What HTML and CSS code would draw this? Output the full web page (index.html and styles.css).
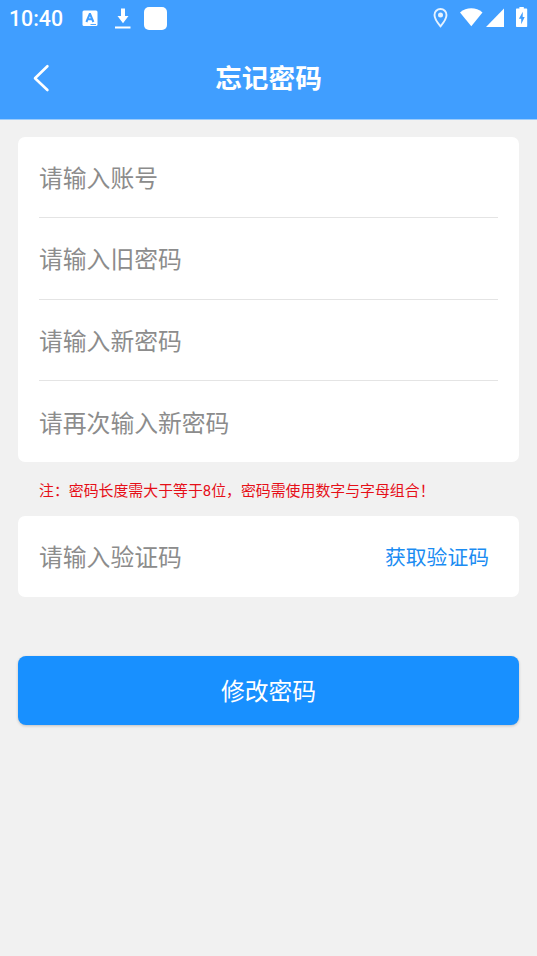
FILE: index.html
```html
<!DOCTYPE html>
<html lang="zh-CN">
<head>
<meta charset="utf-8">
<title>忘记密码</title>
<link rel="stylesheet" href="styles.css">
</head>
<body>
<header class="header">
  <div class="status">
    <span class="time">10:40</span>
    <svg class="status-left" width="90" height="37" viewBox="78 0 90 37">
      <rect x="82.500" y="10.500" width="15" height="15.500" rx="1.500" fill="#fff"/>
      <path d="M86.400 22l3.300-8h0.400l3.300 8M87.800 19.300h4.200" fill="none" stroke="#409eff" stroke-width="2"/>
      <path d="M90.500 24.500h5.500" stroke="#409eff" stroke-width="0.900"/>
      <path d="M121 8.500h4v7.500h3.500L123 23.200 117.500 16h3.500z" fill="#fff"/>
      <rect x="115" y="26.500" width="15.500" height="2" fill="#fff"/>
      <rect x="144" y="7" width="23" height="23" rx="5" fill="#fff"/>
    </svg>
    <svg class="status-right" width="100" height="37" viewBox="430 0 100 37">
      <path d="M440.500 9c-3.400 0-6 2.600-6 6 0 4.300 6 11.300 6 11.300s6-7 6-11.300c0-3.400-2.600-6-6-6z" fill="none" stroke="#e5f2ff" stroke-width="1.900"/>
      <circle cx="440.500" cy="15" r="2.500" fill="#e5f2ff"/>
      <path d="M460 12.400C466.500 7 476 7 482.500 12.400L471.300 26.300z" fill="#fff"/>
      <path d="M504 8.500V27H486z" fill="#fff"/>
      <path d="M519.400 7h4.400v1.500h2.700q0.700 0 0.700 0.700v17.100q0 0.700-0.700 0.700h-9.800q-0.700 0-0.700-0.700V9.200q0-0.700 0.700-0.700h2.700z" fill="#fff"/>
      <path d="M522.800 11.800l-3.900 7h2.300v5.500l3.500-7.300h-2z" fill="#409eff"/>
    </svg>
  </div>
  <div class="nav">
    <svg class="back" width="18" height="28" viewBox="0 0 18 28"><path d="M15.400 2.200L3 14.200 15.400 26" fill="none" stroke="#fff" stroke-width="2.600" stroke-linecap="round" stroke-linejoin="round"/></svg>
    <h1 class="title">忘记密码</h1>
    <span class="nav-end"></span>
  </div>
</header>
<main class="content">
  <section class="card">
    <div class="row">请输入账号</div>
    <div class="row row-tall">请输入旧密码</div>
    <div class="row">请输入新密码</div>
    <div class="row">请再次输入新密码</div>
  </section>
  <p class="note">注：密码长度需大于等于8位，密码需使用数字与字母组合！</p>
  <section class="card">
    <div class="row row-code">
      <span>请输入验证码</span>
      <a class="code">获取验证码</a>
    </div>
  </section>
  <button class="submit">修改密码</button>
</main>
</body>
</html>
```
FILE: styles.css
```css
* { box-sizing: border-box; }
body {
  margin: 0;
  min-height: 956px;
  background: #f1f1f1;
  font-family: Roboto, "Noto Sans CJK SC", sans-serif;
}
.header {
  height: 120px;
  background: #409eff;
  color: #fff;
  border-bottom: 1px solid #9dccfb;
}
.status {
  display: flex;
  height: 37px;
  padding: 0 7px 0 9px;
}
.time {
  width: 69px;
  font-size: 21.3px;
  line-height: 37px;
  font-weight: 500;
}
.status-right { margin-left: auto; }
.nav {
  display: flex;
  align-items: center;
  height: 81px;
  padding: 0 32px;
}
.back, .nav-end { width: 18px; }
.title {
  flex: 1;
  margin: 0;
  padding-top: 2px;
  text-align: center;
  font-size: 26.7px;
  line-height: 40px;
  font-weight: 700;
}
.content { padding: 17px 18px 0; }
.card {
  padding: 0 21px;
  border-radius: 7px;
  background: #fff;
}
.row {
  display: flex;
  align-items: center;
  justify-content: space-between;
  height: 81px;
  padding-top: 4px;
  border-bottom: 1px solid #e4e4e4;
  font-size: 23.8px;
  line-height: 36px;
  color: #8c8c8c;
}
.row-tall {
  height: 82px;
  padding-top: 2px;
}
.row-code { padding-top: 2px; }
.row:last-child { border-bottom: 0; }
.note {
  height: 54px;
  margin: 0;
  padding: 2px 21px 0;
  font-size: 14.9px;
  line-height: 54px;
  white-space: nowrap;
  color: #e60f18;
}
.code {
  margin-right: 9px;
  padding-top: 1px;
  font-size: 20.8px;
  color: #1b8cf2;
}
.submit {
  display: block;
  width: 100%;
  height: 69px;
  margin-top: 59px;
  padding: 0 0 2px;
  border: 0;
  border-radius: 8px;
  background: #1890ff;
  box-shadow: 0 1px 3px rgba(0, 0, 0, .2);
  color: #fff;
  font: 23.8px/67px "Noto Sans CJK SC", sans-serif;
}
```
